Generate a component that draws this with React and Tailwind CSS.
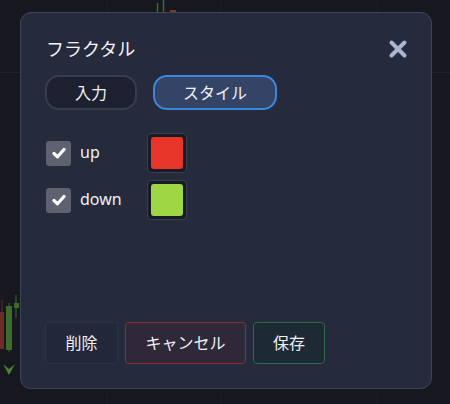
import React from "react";

const font = { fontFamily: '"Noto Sans", "Noto Sans CJK JP", sans-serif' };

function Check() {
  return (
    <svg width="14" height="12" viewBox="0 0 14 12">
      <path d="M2 6.5 L5.5 9.8 L12 2.5" fill="none" stroke="#ffffff" strokeWidth="3.2" strokeLinecap="round" strokeLinejoin="round" />
    </svg>
  );
}

function Row({ label, color }) {
  return (
    <div className="flex items-center h-[40px]">
      <div className="w-[25px] h-[25px] rounded-[3px] bg-[#5e616f] flex items-center justify-center">
        <Check />
      </div>
      <div className="w-[76px] pl-[9px] text-[16px] leading-[22px] text-[#f0f1f5] pb-[2px]">{label}</div>
      <div className="w-[40px] h-[40px] rounded-[4px] bg-[#191b27] border border-[#3a3e4f] p-[3px]">
        <div className="w-full h-full rounded-[3px]" style={{ backgroundColor: color }} />
      </div>
    </div>
  );
}

export default function App() {
  return (
    <div className="relative w-[450px] h-[404px] overflow-hidden bg-[#16171f]" style={font}>
      <svg className="absolute inset-0" width="450" height="404">
        <line x1="0" y1="72.5" x2="450" y2="72.5" stroke="#1f222c" strokeWidth="1" />
        <line x1="107.5" y1="0" x2="107.5" y2="404" stroke="#1b1d27" strokeWidth="1" />
        <line x1="220.5" y1="0" x2="220.5" y2="404" stroke="#1b1d27" strokeWidth="1" />
        <line x1="377.5" y1="0" x2="377.5" y2="404" stroke="#1b1d27" strokeWidth="1" />
        <line x1="157.5" y1="3" x2="157.5" y2="12" stroke="#3f6a2e" strokeWidth="1.5" />
        <line x1="163.5" y1="0" x2="163.5" y2="12" stroke="#3f6a2e" strokeWidth="1.5" />
        <rect x="170" y="10" width="6" height="2" fill="#7a3a2a" />
        <line x1="2" y1="300" x2="2" y2="312" stroke="#6a2a24" strokeWidth="1" />
        <rect x="0" y="312" width="4" height="37" fill="#6e2c25" />
        <line x1="9" y1="303" x2="9" y2="352" stroke="#3f6a2e" strokeWidth="1" />
        <rect x="6" y="306" width="6" height="44" fill="#3f6a2e" />
        <line x1="16" y1="295" x2="16" y2="318" stroke="#3f6a2e" strokeWidth="1" />
        <rect x="14" y="303" width="5" height="5" fill="#3f6a2e" />
        <path d="M3 364 L9 375 L15 364 L9 369 Z" fill="#4f7f33" />
      </svg>

      <div className="relative ml-[20px] mt-[12px] w-[412px] h-[377px] rounded-[11px] bg-[#262a3d] border border-[#3f4356] px-[24px] pt-[23px] flex flex-col">
        <div className="flex items-center justify-between h-[26px]">
          <div className="text-[18px] leading-[26px] text-[#f4f5f8] ml-[1px]">フラクタル</div>
          <svg width="20" height="20" viewBox="0 0 20 20" className="mr-[-1px]">
            <path d="M3.5 3.5 L16.5 16.5 M16.5 3.5 L3.5 16.5" stroke="#a9b6cd" strokeWidth="4" strokeLinecap="round" />
          </svg>
        </div>

        <div className="flex gap-[16px] mt-[13px]">
          <div className="h-[35px] px-[28px] rounded-[14px] border-2 border-[#383c4c] bg-[#1d2030] flex items-center text-[16px] text-[#f0f1f5]">入力</div>
          <div className="h-[35px] px-[28px] rounded-[14px] border-2 border-[#3f86d8] bg-[#334466] flex items-center text-[16px] text-[#f0f1f5]">スタイル</div>
        </div>

        <div className="flex flex-col gap-[7px] mt-[23px] ml-[1px]">
          <Row label="up" color="#e7352a" />
          <Row label="down" color="#9fd744" />
        </div>

        <div className="flex-1" />

        <div className="flex gap-[7px] mb-[24px]">
          <div className="h-[42px] w-[73px] rounded-[4px] border border-[#2d3144] bg-[#23273a] flex items-center justify-center text-[16px] text-[#f0f1f5]">削除</div>
          <div className="h-[42px] w-[121px] rounded-[4px] border border-[#8b2f36] bg-[#2e2839] flex items-center justify-center text-[16px] text-[#f0f1f5]">キャンセル</div>
          <div className="h-[42px] w-[72px] rounded-[4px] border border-[#2b6a4f] bg-[#1d2a33] flex items-center justify-center text-[16px] text-[#f0f1f5]">保存</div>
        </div>
      </div>
    </div>
  );
}
